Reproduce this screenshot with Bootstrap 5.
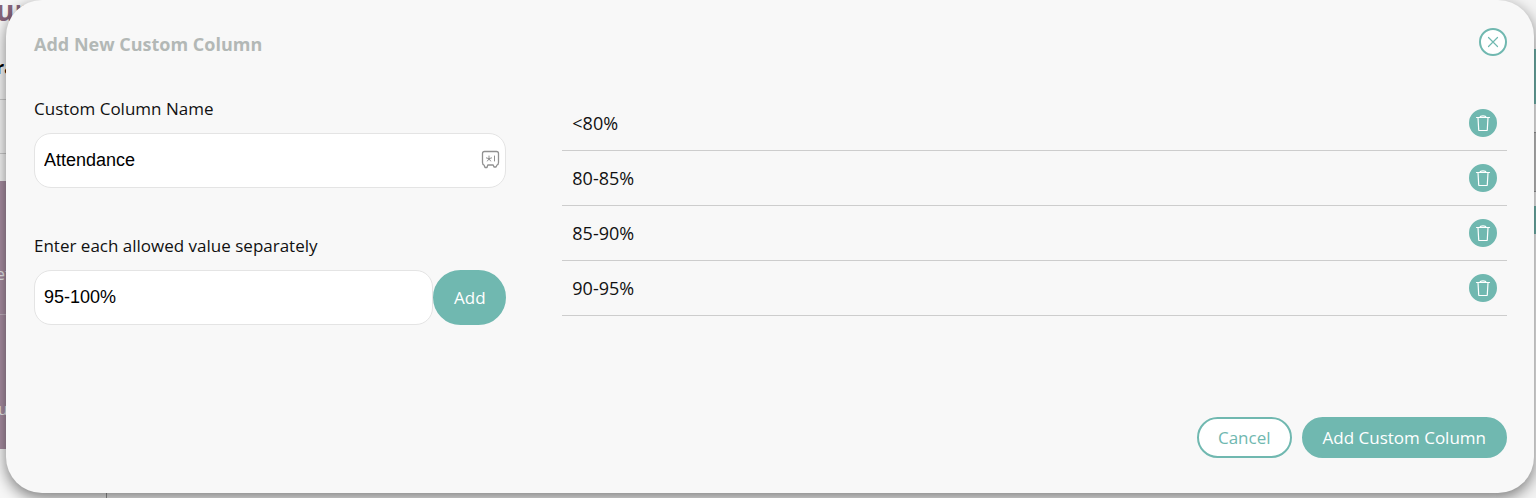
<!DOCTYPE html>
<html lang="en">
<head>
<meta charset="utf-8">
<meta name="viewport" content="width=device-width, initial-scale=1">
<title>Add New Custom Column</title>
<link href="https://cdn.jsdelivr.net/npm/bootstrap@5.3.0/dist/css/bootstrap.min.css" rel="stylesheet">
<style>
  :root { --teal: #70b8b0; --ink: #111; }
  body { font-family: "Open Sans", "Noto Sans", sans-serif; font-size: 17px; line-height: 26px; color: var(--ink); background: #f7f7f7; }

  /* dimmed page behind the dialog */
  .page-behind { position: absolute; inset: 0; overflow: hidden; z-index: 0; white-space: nowrap; }
  .side-left { width: 107px; height: 100%; border-right: 1px solid #999; }
  .brand { height: 49px; font-size: 28px; line-height: 20px; font-weight: 700; color: #86647c; }
  .brand, .crumb { text-indent: -4px; }
  .crumb { height: 50px; font-size: 18px; line-height: 36px; font-weight: 700; color: #000; }
  .rule { height: 54px; border-top: 1px solid #ccc; }
  .side-menu { height: 268px; background: #a88ea2; color: #eee; font-size: 16px; margin-top: -26px; }
  .side-menu div { height: 134px; padding-top: 80px; border-bottom: 1px solid #c2b2be; text-indent: -4px; }
  .side-menu div + div { padding-top: 81px; border: 0; text-indent: -2px; }
  .side-gap { height: 54px; border-top: 1px solid #ccc; }
  .side-right { width: 40px; padding-top: 49px; background: #f4f4f4; }
  .side-right .tab { height: 55px; background: #72b5ad; }
  .side-right .pane { height: 60px; margin: 28px 0 14px; background: #c4c4c4; border: solid #999; border-width: 1px 0; }
  .side-right .chip { height: 28px; background: #72b5ad; }

  .dialog-panel { z-index: 1; margin: 0 2px 5px 6px; padding: 28px 27px 35px 28px; background: #f8f8f8; border-radius: 36px; box-shadow: 0 5px 15px rgba(0, 0, 0, .5); }
  .dialog-title { font-size: 18px; line-height: 32px; font-weight: 700; color: #b3b8b6; }
  .dialog-head { margin-bottom: 36px; }
  .round-btn { width: 28px; height: 28px; padding: 0; border-radius: 50%; border: 2px solid var(--teal); }
  .round-btn svg { display: block; }
  .close-btn { background: #fff; color: var(--teal); }
  .trash-btn { background: var(--teal); color: #fff; }
  .dialog-body { display: grid; grid-template-columns: 1fr 2fr; column-gap: 56px; margin-bottom: 92px; }
  .field-label { margin-bottom: 11px; }
  .field-box, .field-box:focus { height: 55px; padding: 0 9px; font-family: "Liberation Sans", Arial, sans-serif; font-size: 18px; color: #000; background: #fff; border: 1px solid #e4e4e4; border-radius: 17px; }
  .field-group { margin-bottom: 45px; }
  .vault-icon { position: absolute; right: 6px; top: 17px; color: #919191; }
  .teal-btn, .teal-btn:hover { background: var(--teal); border: 2px solid var(--teal); color: #fff; }
  .add-btn { width: 73px; height: 55px; padding: 0; border-radius: 28px; font-size: 17px; }
  .value-row { height: 55px; padding: 0 10px; border-bottom: 1px solid #cdcdcd; font-size: 18px; }
  .dialog-foot { gap: 10px; }
  .foot-btn { height: 41px; padding: 0 19px; border-radius: 21px; font-size: 17px; line-height: 27px; }
  .cancel-btn, .cancel-btn:hover { background: #fff; border: 2px solid var(--teal); color: var(--teal); }
  @media (max-width: 767px) { .dialog-body { grid-template-columns: 1fr; row-gap: 24px; } }
</style>
</head>
<body class="position-relative min-vh-100">
<svg class="d-none">
  <symbol id="trash" viewBox="0 0 16 18"><path d="M1.500 3.500h13M5 3.300c.2-2 5.800-2 6 0M3 3.700l.7 12.100q.1.700.8.700h7q.7 0 .8-.7L13 3.700" fill="none" stroke="currentColor" stroke-width="1.200" stroke-linecap="round"/></symbol>
</svg>

<div class="page-behind d-flex justify-content-between" aria-hidden="true">
  <div class="side-left">
    <div class="brand">ur</div>
    <div class="crumb">ra</div>
    <div class="rule"></div>
    <div class="side-gap"></div>
    <div class="side-menu"><div>ef</div><div>u</div></div>
  </div>
  <div class="side-right">
    <div class="tab"></div>
    <div class="pane"></div>
    <div class="chip"></div>
  </div>
</div>

<main class="dialog-panel position-relative" role="dialog" aria-labelledby="dialogTitle">
  <header class="dialog-head d-flex justify-content-between align-items-start">
    <h1 class="dialog-title mb-0" id="dialogTitle">Add New Custom Column</h1>
    <button type="button" class="round-btn close-btn d-flex align-items-center justify-content-center" aria-label="Close">
      <svg width="12" height="12" viewBox="0 0 12 12"><path d="M1.500 1.500l9 9M10.500 1.500l-9 9" stroke="currentColor" stroke-width="1.200" stroke-linecap="round"/></svg>
    </button>
  </header>

  <div class="dialog-body">
    <form>
      <div class="field-group">
        <label class="field-label d-block" for="columnName">Custom Column Name</label>
        <div class="position-relative">
          <input class="form-control field-box" id="columnName" type="text" value="Attendance">
          <svg class="vault-icon" width="19" height="19" viewBox="0 0 19 19" fill="none" stroke="currentColor" stroke-linecap="round" stroke-linejoin="round">
            <path stroke-width="1.300" d="M3.500 1.500h12q2 0 2 2v9q0 2-1.500 2.500l-1 2h-2l-.8-2H6.800L6 17.500H4L3 15q-1.500-.5-1.500-2.500v-9q0-2 2-2z"/>
            <path d="M8 8.700V6M8 8.700L5.400 7.900M8 8.700l2.600-.8M8 8.700L6.400 11M8 8.700L9.600 11M13.500 6v5"/>
          </svg>
        </div>
      </div>
      <label class="field-label d-block" for="allowedValue">Enter each allowed value separately</label>
      <div class="d-flex">
        <input class="form-control field-box" id="allowedValue" type="text" value="95-100%">
        <button type="button" class="btn teal-btn add-btn flex-shrink-0">Add</button>
      </div>
    </form>

    <ul class="list-unstyled mb-0">
      <li class="value-row d-flex align-items-center justify-content-between">&lt;80%
        <button type="button" class="round-btn trash-btn d-flex align-items-center justify-content-center" aria-label="Delete &lt;80%"><svg width="16" height="18"><use href="#trash"/></svg></button></li>
      <li class="value-row d-flex align-items-center justify-content-between">80-85%
        <button type="button" class="round-btn trash-btn d-flex align-items-center justify-content-center" aria-label="Delete 80-85%"><svg width="16" height="18"><use href="#trash"/></svg></button></li>
      <li class="value-row d-flex align-items-center justify-content-between">85-90%
        <button type="button" class="round-btn trash-btn d-flex align-items-center justify-content-center" aria-label="Delete 85-90%"><svg width="16" height="18"><use href="#trash"/></svg></button></li>
      <li class="value-row d-flex align-items-center justify-content-between">90-95%
        <button type="button" class="round-btn trash-btn d-flex align-items-center justify-content-center" aria-label="Delete 90-95%"><svg width="16" height="18"><use href="#trash"/></svg></button></li>
    </ul>
  </div>

  <footer class="dialog-foot d-flex justify-content-end">
    <button type="button" class="btn foot-btn cancel-btn">Cancel</button>
    <button type="button" class="btn foot-btn teal-btn">Add Custom Column</button>
  </footer>
</main>
<script src="https://cdn.jsdelivr.net/npm/bootstrap@5.3.0/dist/js/bootstrap.bundle.min.js"></script>
</body>
</html>
